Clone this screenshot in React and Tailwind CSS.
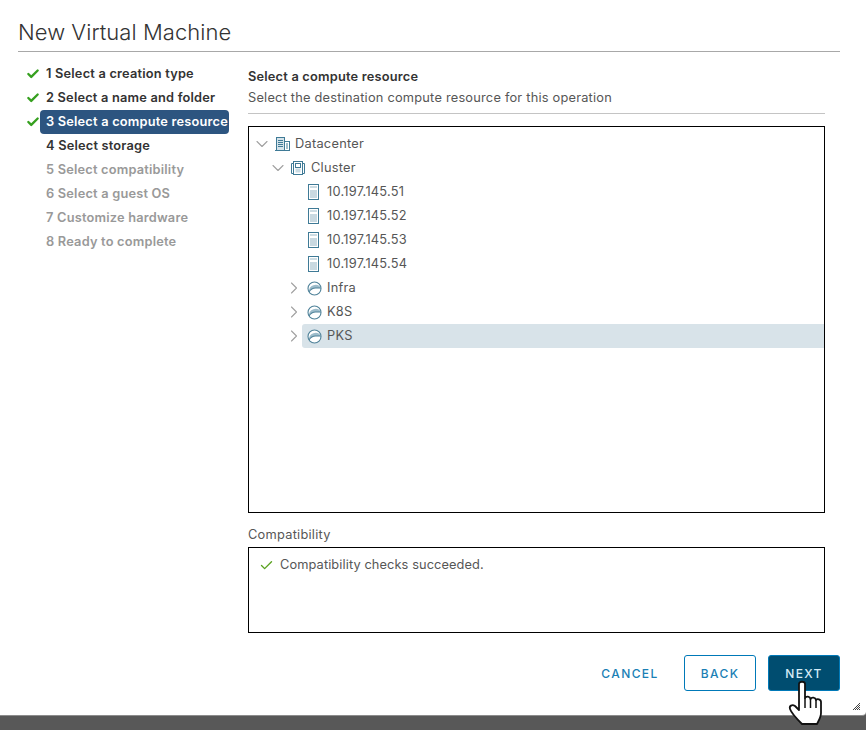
import { ChevronDown, ChevronRight, Check } from 'lucide-react'

const steps = [
  { label: '1 Select a creation type', done: true, color: 'text-[#333]' },
  { label: '2 Select a name and folder', done: true, color: 'text-[#333]' },
  { label: '3 Select a compute resource', done: true, active: true, color: 'text-white' },
  { label: '4 Select storage', color: 'text-[#333]' },
  { label: '5 Select compatibility', color: 'text-[#999]' },
  { label: '6 Select a guest OS', color: 'text-[#999]' },
  { label: '7 Customize hardware', color: 'text-[#999]' },
  { label: '8 Ready to complete', color: 'text-[#999]' },
]

function DatacenterIcon() {
  return (
    <svg width="16" height="16" viewBox="0 0 16 16" fill="none" stroke="#3f7a96" strokeWidth="1">
      <rect x="2.500" y="1.500" width="8" height="13" fill="#d5e3ea" />
      <rect x="10.500" y="5.500" width="5" height="9" fill="#fff" />
      <path d="M4 4.500h5M4 6.500h5M4 8.500h5M4 10.500h5M12 8h2M12 10h2M12 12h2M1 14.500h15" strokeWidth="1" />
    </svg>
  )
}

function ClusterIcon() {
  return (
    <svg width="16" height="16" viewBox="0 0 16 16" fill="none" stroke="#3f7a96" strokeWidth="1">
      <path d="M3.500 3.500h-2v10h2M12.500 3.500h2v10h-2" />
      <rect x="3.500" y="1.500" width="9" height="13" fill="#fff" />
      <rect x="5.500" y="3.500" width="5" height="4" fill="#fff" />
      <rect x="5.500" y="8.500" width="5" height="4" fill="#c9dbe4" stroke="none" />
    </svg>
  )
}

function HostIcon() {
  return (
    <svg width="12" height="16" viewBox="0 0 12 16" fill="none" stroke="#3f7a96" strokeWidth="1">
      <rect x="0.500" y="0.500" width="10" height="15" fill="#fff" />
      <rect x="2" y="6" width="7" height="8" fill="#c9d9e1" stroke="none" />
      <path d="M2 3h7" stroke="#9dbac8" />
    </svg>
  )
}

function PoolIcon() {
  return (
    <svg width="15" height="15" viewBox="0 0 15 15" fill="none" stroke="#4f8299" strokeWidth="1.100">
      <circle cx="7.500" cy="7.500" r="6.500" fill="#fff" />
      <path d="M2 11C3.500 8.500 5.500 7 8.500 7H14A6.500 6.500 0 0 0 2 11z" fill="#9dbccb" stroke="none" />
      <path d="M2 11C3.500 8.500 5.500 7 8.500 7H14" />
    </svg>
  )
}

function TreeRow({ pad, chevron, icon, label, selected }) {
  return (
    <div className="flex h-6 items-center" style={{ paddingLeft: pad }}>
      <span className="flex w-[16px] shrink-0 items-center justify-center text-[#a0a0a0]">
        {chevron === 'down' && <ChevronDown size={20} strokeWidth={1.300} className="shrink-0" />}
        {chevron === 'right' && <ChevronRight size={20} strokeWidth={1.300} className="shrink-0" />}
      </span>
      <div className={`flex h-6 flex-1 items-center rounded-l-[3px] pl-[4px] ${selected ? 'bg-[#d8e3e9]' : ''}`}>
        <span className="flex w-[16px] shrink-0 justify-center">{icon}</span>
        <span className="ml-[5px] text-[12.8px] tracking-[0.25px] text-[#565656]">{label}</span>
      </div>
    </div>
  )
}

function HandCursor() {
  return (
    <svg width="36" height="47" viewBox="0 0 36 47" className="absolute left-[788px] top-[679px]">
      <path
        d="M11 5c0-3 6-3 6 0V19c1-2 5-2 5.500 1 1-2 5-2 5.500 1 1-1.500 5-1 5 2V34c0 4-2 7-4 11H14C10 41 3 33 2 30c-1-3 2-5 5-3l4 4z"
        fill="#fff"
        stroke="#111"
        strokeWidth="1.800"
        strokeLinejoin="round"
      />
      <path d="M17 19v10M22.500 20v9M28 21v8" stroke="#111" strokeWidth="1.500" fill="none" />
    </svg>
  )
}

export default function App() {
  return (
    <div className="relative h-[730px] w-[866px] overflow-hidden bg-[#585858] font-['Inter','Liberation_Sans',sans-serif]">
      <div className="flex h-[716px] flex-col rounded-br-[4px] border-b border-[#8c8c8c] bg-white pl-[18px] pr-[26px]">
        {/* Title */}
        <div className="flex h-[52px] items-end border-b border-[#a8a8a8] pb-[5px]">
          <h1 className="text-[22px] leading-[28px] font-light tracking-[0.05px] text-[#333]">New Virtual Machine</h1>
        </div>

        <div className="flex h-[603px]">
          {/* Steps */}
          <ul className="w-[230px] shrink-0 pt-[10px] pl-[7px]">
            {steps.map(s => (
              <li key={s.label} className="flex h-6 items-center">
                <span className="flex w-[15px] shrink-0 justify-center">
                  {s.done && <Check size={14} strokeWidth={4} className="text-[#36a01f]" />}
                </span>
                <span
                  className={`flex h-6 w-[189px] items-center whitespace-nowrap rounded-[4px] pl-[6px] text-[12.8px] leading-[24px] font-semibold tracking-[0.2px] ${s.color} ${s.active ? 'bg-[#2d5580]' : ''}`}
                >
                  {s.label}
                </span>
              </li>
            ))}
          </ul>

          {/* Main pane */}
          <div className="flex w-[577px] flex-col">
            <div className="mt-[16px] h-[46px] border-b border-[#c4c4c4]">
              <div className="text-[12.8px] leading-[18px] font-semibold tracking-[0.2px] text-[#333]">Select a compute resource</div>
              <div className="mt-[3px] text-[12.8px] leading-[18px] tracking-[0.22px] text-[#565656]">
                Select the destination compute resource for this operation
              </div>
            </div>

            <div className="mt-[12px] h-[387px] border border-black pt-[5px] pl-[5px]">
              <TreeRow pad={0} chevron="down" icon={<DatacenterIcon />} label="Datacenter" />
              <TreeRow pad={16} chevron="down" icon={<ClusterIcon />} label="Cluster" />
              <TreeRow pad={32} icon={<HostIcon />} label="10.197.145.51" />
              <TreeRow pad={32} icon={<HostIcon />} label="10.197.145.52" />
              <TreeRow pad={32} icon={<HostIcon />} label="10.197.145.53" />
              <TreeRow pad={32} icon={<HostIcon />} label="10.197.145.54" />
              <TreeRow pad={32} chevron="right" icon={<PoolIcon />} label="Infra" />
              <TreeRow pad={32} chevron="right" icon={<PoolIcon />} label="K8S" />
              <TreeRow pad={32} chevron="right" icon={<PoolIcon />} label="PKS" selected />
            </div>

            <div className="mt-[13px] h-[21px] text-[12.8px] leading-[18px] tracking-[0.25px] text-[#565656]">Compatibility</div>
            <div className="h-[86px] border border-black pt-[8px] pl-[10px]">
              <div className="flex items-center gap-[6px]">
                <Check size={15} strokeWidth={2.200} className="text-[#5aa220]" />
                <span className="text-[12.8px] leading-[18px] tracking-[0.1px] text-[#565656]">Compatibility checks succeeded.</span>
              </div>
            </div>
          </div>
        </div>

        {/* Footer buttons */}
        <div className="flex h-[36px] items-center justify-end gap-3 text-[12px] font-medium tracking-[1.400px]">
          <button className="flex h-9 w-[84px] items-center justify-center pt-[1px] text-[#1a7fb5]">CANCEL</button>
          <button className="flex h-9 w-[72px] items-center justify-center rounded-[3px] border border-[#0079b8] pt-[1px] text-[#1a7fb5]">
            BACK
          </button>
          <button className="flex h-9 w-[72px] items-center justify-center rounded-[3px] border border-[#0079b8] bg-[#004d70] pt-[1px] text-[#d5ecf7]">
            NEXT
          </button>
        </div>
      </div>

      {/* Resize handle */}
      <svg width="7" height="7" viewBox="0 0 7 7" className="absolute left-[853px] top-[703px]" stroke="#444" strokeWidth="1">
        <path d="M0 7l7-7M2 7l5-5M4 7l3-3M6 7l1-1" />
      </svg>
      <HandCursor />
    </div>
  )
}
